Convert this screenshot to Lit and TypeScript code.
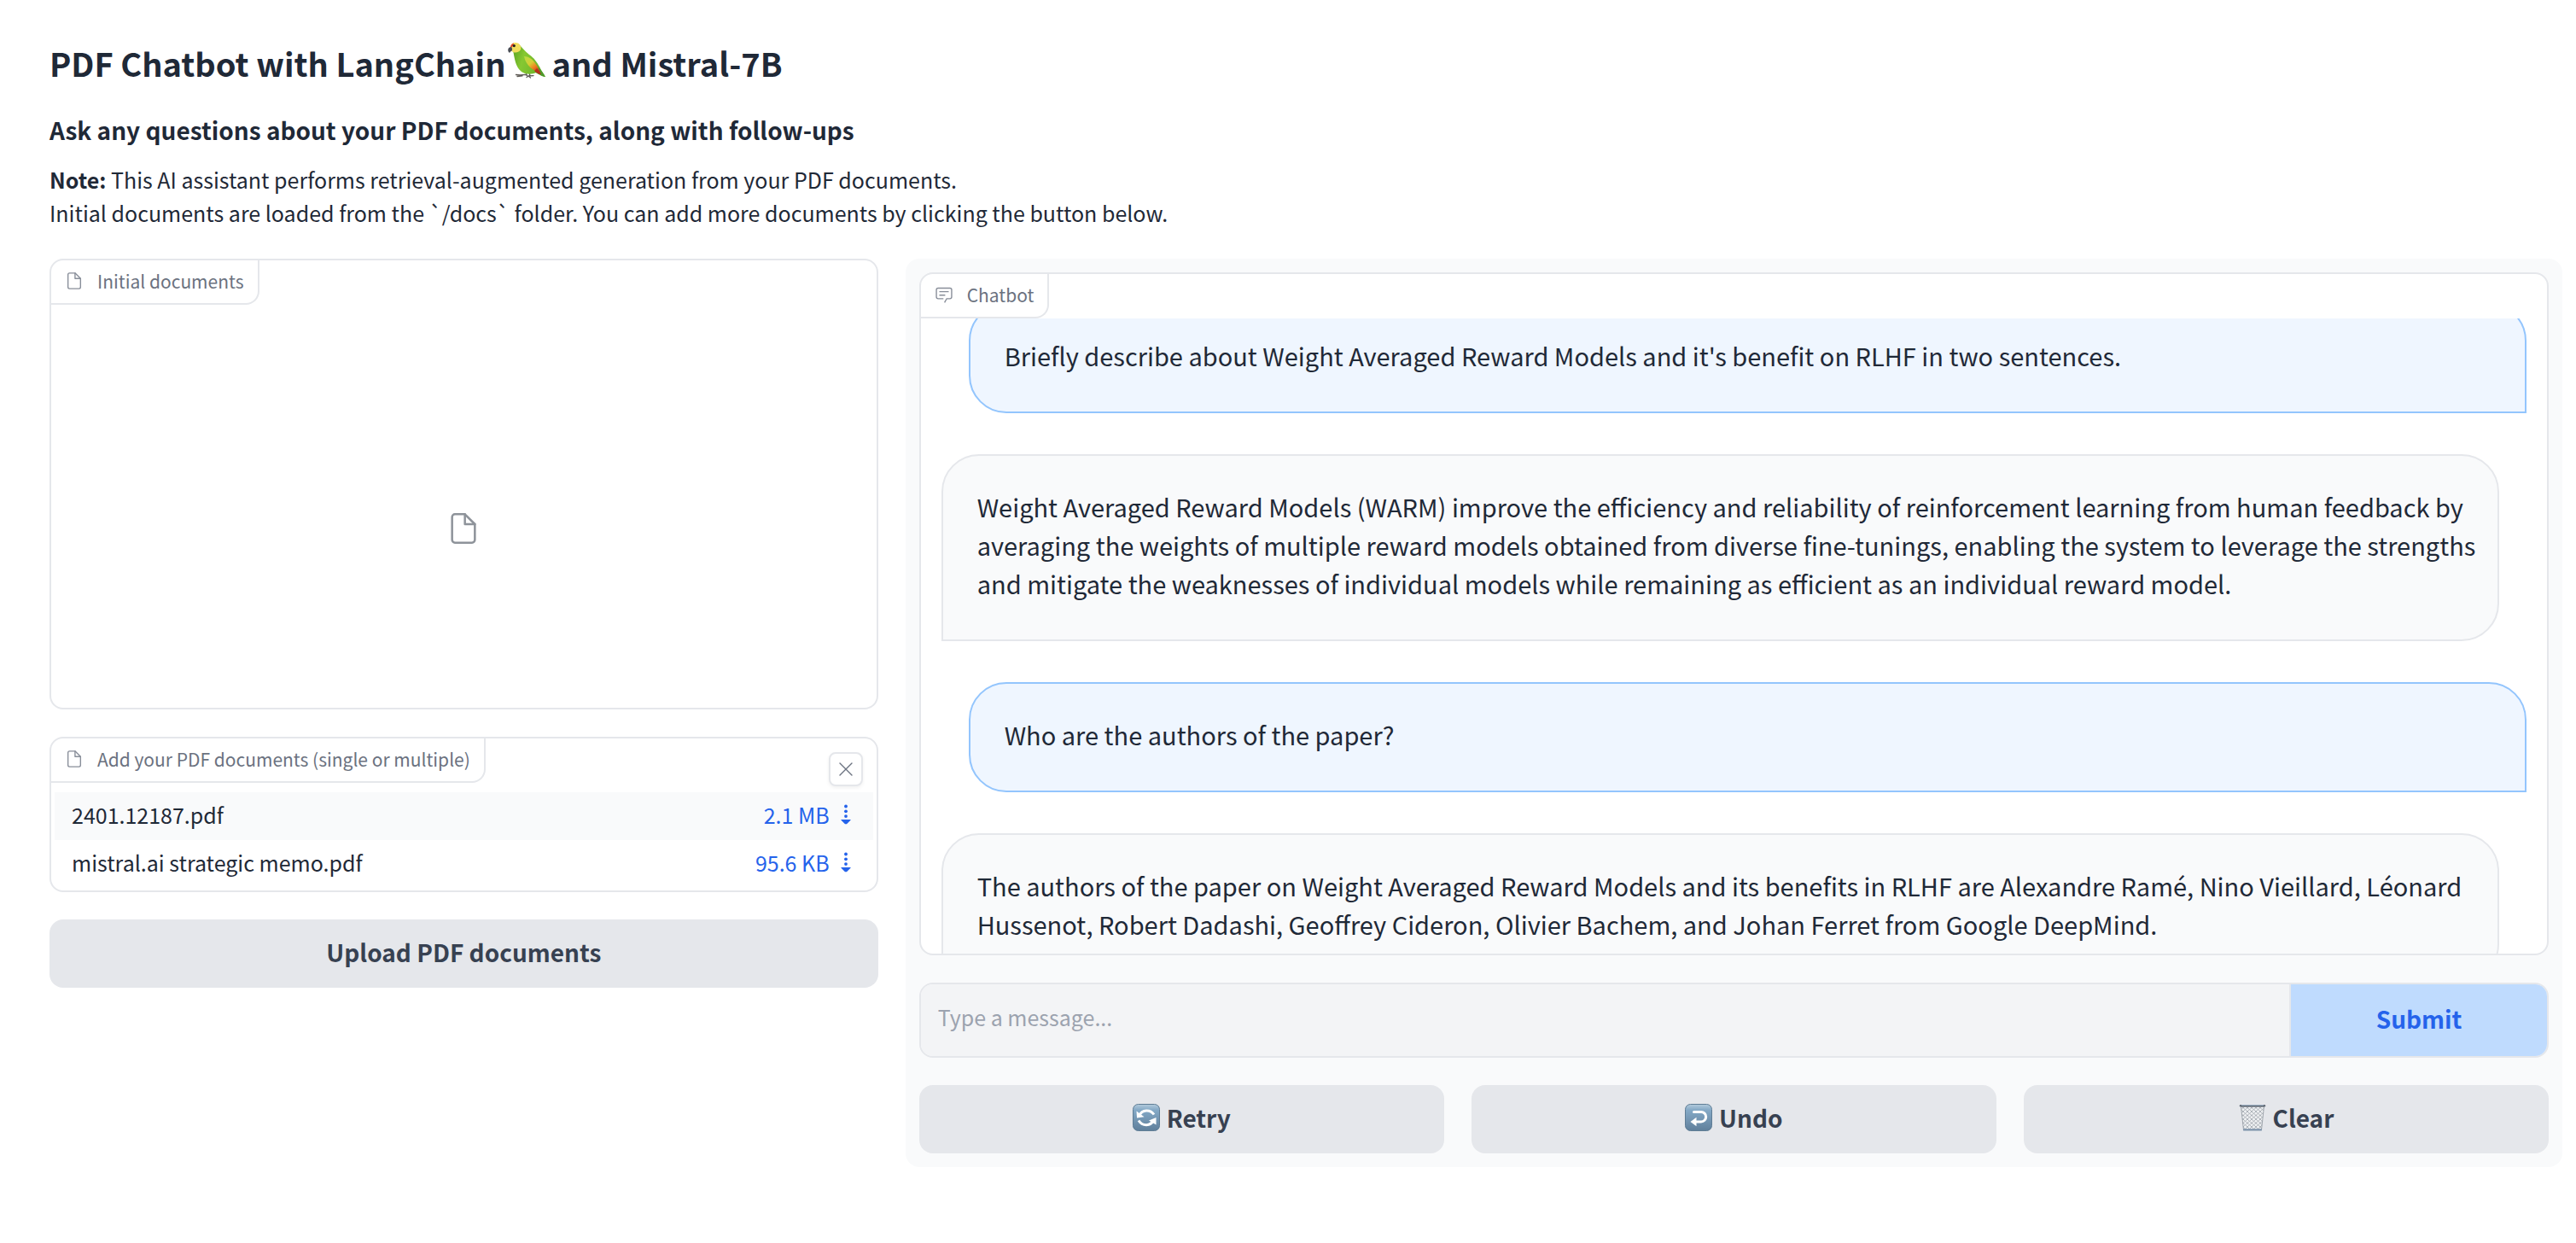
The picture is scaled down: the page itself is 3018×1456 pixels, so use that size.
import { LitElement, html, css, svg } from "lit";
import { customElement, query, state } from "lit/decorators.js";

interface Message {
  from: "user" | "bot";
  text: string;
}

interface PdfFile {
  name: string;
  size: string;
}

const fileIcon = (cls: string) => html`
  <svg class=${cls} viewBox="0 0 24 24" fill="none" stroke="currentColor" stroke-width="1.5"
    stroke-linecap="round" stroke-linejoin="round" aria-hidden="true">
    <path d="M13 2H6a2 2 0 0 0-2 2v16a2 2 0 0 0 2 2h12a2 2 0 0 0 2-2V9z"></path>
    <polyline points="13 2 13 9 20 9"></polyline>
  </svg>`;

const chatIcon = html`
  <svg class="label-icon" viewBox="0 0 32 32" fill="currentColor" aria-hidden="true">
    <path d="M17.740 30L16 29l4-7h6a2 2 0 0 0 2-2V8a2 2 0 0 0-2-2H6a2 2 0 0 0-2 2v12a2 2 0 0 0 2 2h9v2H6a4 4 0 0 1-4-4V8a4 4 0 0 1 4-4h20a4 4 0 0 1 4 4v12a4 4 0 0 1-4 4h-4.840z"></path>
    <path d="M8 10h16v2H8zM8 16h10v2H8z"></path>
  </svg>`;

const closeIcon = html`
  <svg class="close-icon" viewBox="0 0 20 20" fill="none" stroke="currentColor" stroke-width="1.4"
    stroke-linecap="round" aria-hidden="true">
    <path d="M3 3L17 17M17 3L3 17"></path>
  </svg>`;

const downIcon = html`
  <svg class="down-icon" viewBox="0 0 12 24" fill="currentColor" aria-hidden="true">
    <circle cx="6" cy="2.500" r="1.900"></circle>
    <circle cx="6" cy="8.300" r="1.900"></circle>
    <circle cx="6" cy="14.100" r="1.900"></circle>
    <path d="M0.500 18h11v0.800L7 23.200H5L0.500 18.800z"></path>
  </svg>`;

const parrot = html`
  <svg class="parrot" viewBox="0 0 44 42" role="img" aria-label="parrot">
    <defs>
      <linearGradient id="body" x1="0" y1="0" x2="1" y2="0.300">
        <stop offset="0" stop-color="#57a021"></stop>
        <stop offset="0.400" stop-color="#86c832"></stop>
        <stop offset="1" stop-color="#6bb32a"></stop>
      </linearGradient>
      <linearGradient id="wing" x1="0" y1="0" x2="0.800" y2="1">
        <stop offset="0" stop-color="#b5dc46"></stop>
        <stop offset="0.450" stop-color="#d6cf35"></stop>
        <stop offset="0.720" stop-color="#f07d1f"></stop>
        <stop offset="1" stop-color="#c2381a"></stop>
      </linearGradient>
    </defs>
    <path d="M21 34l1 4M25 35l1 4M9.500 37.500l5 0.500 6-0.700 2 1M11 39.500l6-0.600M22 40.500l2-1.500 6-0.400M24 39l2.500 2" fill="none"
      stroke="#5d5a55" stroke-width="1.300" stroke-linecap="round"></path>
    <path d="M13 2C17 6 20 10 25 14c6 4 9 9 12 14 2 4 4 8 7 12-3 0-7-3-11-5-4 2-9 2-13 1C14 34 11 29 9 23 7.500 18 7 13 6 9z" fill="url(#body)"></path>
    <path d="M36 29c3 3 6 7 8 11-3 0-8-3-12-5.500z" fill="#4f9a2a"></path>
    <path d="M19 16c5 0 10 3 13 8 3 4 4 7 6 11-8-2-17-8-19-19z" fill="url(#wing)"></path>
    <path d="M34 30c2 2 4 5 5 7-3 0-6-2-8-4z" fill="#b9301b"></path>
    <path d="M3 5C3 2 6 0 9 0c4 0 6 3 6.300 6 0 4-3 5-6 5.500C5.500 12 3 9 3 5z" fill="#f1dd5b"></path>
    <path d="M3 4.500C4 2 5 1 7 0.500L6 4 3.500 6z" fill="#e0402c"></path>
    <path d="M4 5C1.500 4.500 0 7 0.200 9c0.200 1.500 1 2.500 2 3 0.300-1.500 1.500-2 2.500-2.500C5.500 8 5 6 4 5z" fill="#484c54"></path>
    <circle cx="7.300" cy="3.600" r="1.600" fill="#22201c"></circle>
  </svg>`;

const tile = svg`
  <defs>
    <linearGradient id="tile" x1="0" y1="0" x2="0" y2="1">
      <stop offset="0" stop-color="#b3cbdc"></stop>
      <stop offset="0.220" stop-color="#84a9c6"></stop>
      <stop offset="1" stop-color="#5f7f9b"></stop>
    </linearGradient>
  </defs>
  <rect x="0.500" y="0.500" width="31" height="31" rx="6" fill="url(#tile)" stroke="#5f7d95"></rect>`;

const retryIcon = html`
  <svg class="emoji" viewBox="0 0 32 32" aria-hidden="true">
    ${tile}
    <path d="M8 13.500C11 6.500 20.500 6 25 12.500M24.500 19C21 26.500 11.500 26.500 7 19.500" fill="none" stroke="#fff" stroke-width="3"></path>
    <path d="M4.500 8.500L5 16.500l8.500-1.200zM27.500 16v8.500l-8.500-5z" fill="#fff"></path>
  </svg>`;

const undoIcon = html`
  <svg class="emoji" viewBox="0 0 32 32" aria-hidden="true">
    ${tile}
    <path d="M10.500 9.500H19a5.700 5.700 0 0 1 0 11.400H12" fill="none" stroke="#fff" stroke-width="3" stroke-linecap="round"></path>
    <path d="M6.500 21l7-5.200v10.400z" fill="#fff"></path>
  </svg>`;

const clearIcon = html`
  <svg class="emoji" viewBox="0 0 32 32" aria-hidden="true">
    <defs>
      <pattern id="mesh" width="5" height="4.500" patternUnits="userSpaceOnUse">
        <path d="M0 0L5 4.500M5 0L0 4.500" stroke="#9299a1" stroke-width="0.700"></path>
      </pattern>
    </defs>
    <path d="M2.500 3h27l-3 27.500h-21z" fill="#eef0f2"></path>
    <path d="M2.500 3h27l-3 27.500h-21z" fill="url(#mesh)" stroke="#8e959d" stroke-width="0.800"></path>
    <rect x="0.800" y="1" width="30.400" height="2.600" rx="1.300" fill="#626b76"></rect>
    <path d="M3 1.500h26" stroke="#a9c0d6" stroke-width="0.800"></path>
    <rect x="5" y="29.200" width="22" height="2.400" rx="1.200" fill="#7d93aa"></rect>
  </svg>`;

@customElement("app-root")
export class AppRoot extends LitElement {
  @state() private files: PdfFile[] = [
    { name: "2401.12187.pdf", size: "2.1 MB" },
    { name: "mistral.ai strategic memo.pdf", size: "95.6 KB" },
  ];

  @state() private messages: Message[] = [
    {
      from: "user",
      text: "Briefly describe about Weight Averaged Reward Models and it's benefit on RLHF in two sentences.",
    },
    {
      from: "bot",
      text: "Weight Averaged Reward Models (WARM) improve the efficiency and reliability of reinforcement learning from human feedback by averaging the weights of multiple reward models obtained from diverse fine-tunings, enabling the system to leverage the strengths and mitigate the weaknesses of individual models while remaining as efficient as an individual reward model.",
    },
    { from: "user", text: "Who are the authors of the paper?" },
    {
      from: "bot",
      text: "The authors of the paper on Weight Averaged Reward Models and its benefits in RLHF are Alexandre Ramé, Nino Vieillard, Léonard Hussenot, Robert Dadashi, Geoffrey Cideron, Olivier Bachem, and Johan Ferret from Google DeepMind.",
    },
  ];

  @query(".log") private log!: HTMLElement;

  static styles = css`
    :host {
      display: block;
      background: #fff;
      color: #1f2937;
      font-family: "Noto Sans CJK SC", "Noto Sans", sans-serif;
      font-size: 25px;
    }
    * {
      box-sizing: border-box;
    }
    .page {
      padding: 46px 16px 40px 58px;
    }
    h1 {
      margin: 0;
      font-size: 38px;
      line-height: 56px;
      font-weight: 600;
      display: flex;
      align-items: center;
    }
    .parrot {
      width: 44px;
      height: 42px;
      margin: 0 8px 6px 2px;
    }
    h2 {
      margin: 28px 0 0;
      font-size: 28px;
      line-height: 44px;
      font-weight: 600;
    }
    .note {
      margin: 17px 0 34px;
      line-height: 39px;
    }
    .note strong {
      font-weight: 600;
    }
    .columns {
      display: grid;
      grid-template-columns: minmax(0, 1fr) minmax(0, 2fr);
      gap: 32px;
      align-items: start;
    }
    .side {
      display: flex;
      flex-direction: column;
      gap: 32px;
    }
    .panel {
      position: relative;
      display: flex;
      flex-direction: column;
      align-items: stretch;
      background: #fff;
      border: 2px solid #e5e7eb;
      border-radius: 16px;
      overflow: hidden;
    }
    .label {
      align-self: flex-start;
      display: flex;
      align-items: center;
      gap: 16px;
      padding: 0 16px 2px;
      border: solid #e5e7eb;
      border-width: 0 2px 2px 0;
      border-radius: 0 0 16px 0;
      color: #6b7280;
      font-size: 21px;
      line-height: 48px;
    }
    .label-icon {
      width: 22px;
      height: 22px;
      opacity: 0.8;
    }
    .empty {
      display: flex;
      align-items: center;
      justify-content: center;
      height: 472px;
      padding-top: 52px;
      color: #1f2937;
    }
    .empty-icon {
      width: 40px;
      height: 40px;
      opacity: 0.5;
    }
    .close {
      position: absolute;
      top: 16px;
      right: 16px;
      width: 40px;
      height: 40px;
      padding: 0;
      display: flex;
      align-items: center;
      justify-content: center;
      background: #fff;
      border: 2px solid #e5e7eb;
      border-radius: 8px;
      box-shadow: 0 2px 4px rgba(0, 0, 0, 0.06);
      color: #6b7280;
    }
    .close-icon {
      width: 20px;
      height: 20px;
    }
    table {
      margin: 11px 4px 3px;
      border-collapse: collapse;
      line-height: 52px;
    }
    tr:nth-child(odd) {
      background: #f9fafb;
    }
    td {
      padding: 0 20px 4px;
    }
    td.size {
      padding-right: 26px;
      text-align: right;
    }
    td a {
      display: inline-flex;
      align-items: center;
      gap: 13px;
      color: #2563eb;
      text-decoration: none;
    }
    .down-icon {
      width: 12px;
      height: 24px;
    }
    .button {
      display: flex;
      align-items: center;
      justify-content: center;
      gap: 8px;
      height: 80px;
      padding: 0 0 4px;
      border: 0;
      border-radius: 16px;
      background: #e5e7eb;
      color: #374151;
      font: inherit;
      font-size: 28px;
      font-weight: 600;
    }
    .emoji {
      width: 32px;
      height: 32px;
    }
    .chat {
      display: flex;
      flex-direction: column;
      gap: 32px;
      padding: 16px;
      border-radius: 16px;
      background: #f9fafb;
    }
    .log {
      display: flex;
      flex-direction: column;
      gap: 48px;
      height: 744px;
      padding: 48px 24px;
      overflow-y: auto;
      scrollbar-width: none;
    }
    .message {
      flex: none;
      padding: 37px 20px 43px 40px;
      border: 2px solid #e5e7eb;
      background: #f9fafb;
      font-size: 29px;
      line-height: 45px;
    }
    .bot {
      margin-right: 32px;
      border-radius: 44px 44px 44px 0;
    }
    .user {
      margin-left: 32px;
      border-color: #93c5fd;
      border-radius: 44px 44px 0 44px;
      background: #eff6ff;
    }
    .composer {
      display: flex;
      height: 88px;
      border: 2px solid #e5e7eb;
      border-radius: 16px;
      overflow: hidden;
    }
    .composer input {
      flex: 1;
      min-width: 0;
      padding: 0 20px 8px;
      border: 0;
      border-right: 2px solid #e5e7eb;
      border-radius: 0;
      background: #f3f4f6;
      color: inherit;
      font: inherit;
    }
    .composer input::placeholder {
      color: #9ca3af;
      opacity: 1;
    }
    .submit {
      width: 300px;
      padding: 0 0 4px;
      border: 0;
      background: #bfdbfe;
      color: #2563eb;
      font: inherit;
      font-size: 28px;
      font-weight: 600;
    }
    .actions {
      display: grid;
      grid-template-columns: repeat(3, minmax(0, 1fr));
      gap: 32px;
    }
  `;

  protected firstUpdated() {
    this.log.scrollTop = 66;
  }

  render() {
    return html`
      <main class="page">
        <h1>PDF Chatbot with LangChain${parrot}and Mistral-7B</h1>
        <h2>Ask any questions about your PDF documents, along with follow-ups</h2>
        <p class="note">
          <strong>Note:</strong> This AI assistant performs retrieval-augmented generation from your PDF documents.<br />
          Initial documents are loaded from the \`/docs\` folder. You can add more documents by clicking the button below.
        </p>
        <div class="columns">
          <section class="side">
            <div class="panel">
              <div class="label">${fileIcon("label-icon")}<span>Initial documents</span></div>
              <div class="empty">${fileIcon("empty-icon")}</div>
            </div>
            <div class="panel">
              <div class="label">${fileIcon("label-icon")}<span>Add your PDF documents (single or multiple)</span></div>
              <button class="close" type="button" aria-label="Clear files">${closeIcon}</button>
              <table>
                <tbody>
                  ${this.files.map(
                    (f) => html`<tr>
                      <td>${f.name}</td>
                      <td class="size"><a href="#">${f.size}${downIcon}</a></td>
                    </tr>`
                  )}
                </tbody>
              </table>
            </div>
            <button class="button" type="button">Upload PDF documents</button>
          </section>
          <section class="chat">
            <div class="panel">
              <div class="label">${chatIcon}<span>Chatbot</span></div>
              <div class="log">
                ${this.messages.map((m) => html`<div class="message ${m.from}">${m.text}</div>`)}
              </div>
            </div>
            <form class="composer" @submit=${(e: Event) => e.preventDefault()}>
              <input type="text" aria-label="Message" placeholder="Type a message..." />
              <button class="submit" type="submit">Submit</button>
            </form>
            <div class="actions">
              <button class="button" type="button">${retryIcon}<span>Retry</span></button>
              <button class="button" type="button">${undoIcon}<span>Undo</span></button>
              <button class="button" type="button">${clearIcon}<span>Clear</span></button>
            </div>
          </section>
        </div>
      </main>
    `;
  }
}
